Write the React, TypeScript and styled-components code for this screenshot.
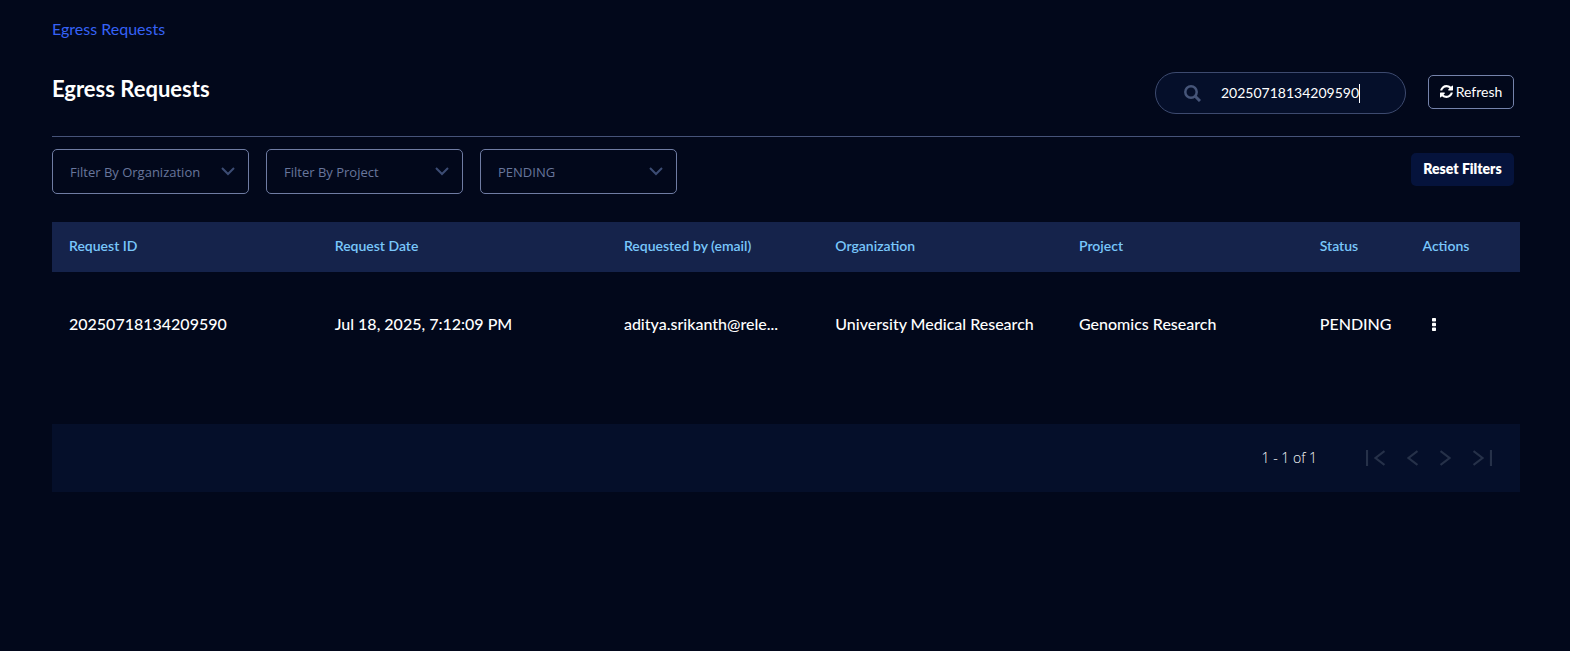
import React, { useState } from 'react';
import styled, { createGlobalStyle } from 'styled-components';

const GlobalStyle = createGlobalStyle`
  *, *::before, *::after { box-sizing: border-box; }
  body {
    margin: 0;
    background: #02081b;
    color: #fff;
    font-family: Lato, 'Liberation Sans', sans-serif;
    font-size: 16px;
    line-height: 24px;
  }
  button, input, select { font-family: inherit; }
`;

const Page = styled.main`
  padding: 17px 50px 24px 52px;
`;

const Breadcrumb = styled.a`
  display: inline-block;
  color: #3662f6;
  text-decoration: none;
`;

const Header = styled.header`
  display: flex;
  align-items: center;
  justify-content: space-between;
  margin-top: 16px;
  padding: 15px 6px 22px 0;
  border-bottom: 1px solid #465379;
`;

const Title = styled.h1`
  margin: 0 0 8px;
  font-size: 22px;
  line-height: 28px;
  font-weight: 700;
`;

const HeaderTools = styled.div`
  display: flex;
  align-items: center;
  gap: 22px;
`;

const SearchBox = styled.label`
  display: flex;
  align-items: center;
  width: 251px;
  height: 42px;
  padding-left: 28px;
  border: 1px solid #3d4a6f;
  border-radius: 21px;
  background: #050f2a;
  svg { margin-right: 20px; flex: none; }
`;

const SearchInput = styled.input`
  field-sizing: content;
  min-width: 8px;
  max-width: 160px;
  padding: 0;
  border: 0;
  outline: 0;
  background: transparent;
  color: #fff;
  caret-color: transparent;
  font-size: 14px;
  line-height: 20px;
`;

const Caret = styled.span`
  width: 1px;
  height: 19px;
  background: #fff;
`;

const RefreshButton = styled.button`
  display: flex;
  align-items: center;
  justify-content: center;
  gap: 3px;
  width: 86px;
  height: 34px;
  margin-bottom: 2px;
  padding: 0 0 2px;
  border: 1px solid #7583ab;
  border-radius: 5px;
  background: transparent;
  color: #fff;
  font-size: 14px;
`;

const FilterBar = styled.section`
  display: flex;
  align-items: center;
  justify-content: space-between;
  padding: 12px 6px 28px 0;
`;

const Filters = styled.div`
  display: flex;
  gap: 17px;
`;

const SelectWrap = styled.div`
  display: grid;
  align-items: center;
  width: 197px;
  > * { grid-area: 1 / 1; }
  svg { justify-self: end; margin-right: 14px; pointer-events: none; }
`;

const FilterSelect = styled.select`
  appearance: none;
  width: 100%;
  height: 45px;
  padding: 0 40px 0 17px;
  border: 1px solid #6f7ca3;
  border-radius: 5px;
  background: transparent;
  color: #68769c;
  font-family: 'Open Sans', sans-serif;
  font-size: 13px;
`;

const ResetButton = styled.button`
  height: 33px;
  width: 103px;
  margin-bottom: 4px;
  padding: 0 0 2px;
  border: 0;
  border-radius: 5px;
  background: #05133c;
  color: #fff;
  font-size: 14px;
  font-weight: 800;
`;

const Table = styled.table`
  width: 100%;
  table-layout: fixed;
  border-collapse: collapse;
  text-align: left;
`;

const Col = styled.col<{ $share: number }>`
  width: ${(p) => p.$share}%;
`;

const HeadCell = styled.th`
  height: 50px;
  padding: 0 17px 2px;
  background: #15234b;
  color: #79c7fb;
  font-size: 14px;
  font-weight: 600;
`;

const Cell = styled.td<{ $wide?: boolean }>`
  height: 106px;
  padding: 0 ${(p) => (p.$wide ? 0 : 17)}px 2px 17px;
  font-weight: 500;
  white-space: nowrap;
  overflow: hidden;
  text-overflow: ellipsis;
`;

const Email = styled.div`
  max-width: 158px;
  overflow: hidden;
  text-overflow: ellipsis;
`;

const MenuButton = styled.button`
  display: flex;
  align-items: center;
  justify-content: center;
  width: 24px;
  height: 24px;
  padding: 0;
  border: 0;
  background: transparent;
  color: #fff;
`;

const Pager = styled.nav`
  display: flex;
  align-items: center;
  justify-content: flex-end;
  height: 68px;
  margin-top: 46px;
  padding-right: 17px;
  background: #050f2a;
`;

const Range = styled.span`
  margin-right: 38px;
  font-family: 'Open Sans', sans-serif;
  font-weight: 300;
  font-size: 14px;
`;

const PagerButton = styled.button<{ $edge?: boolean }>`
  display: flex;
  align-items: center;
  justify-content: center;
  width: ${(p) => (p.$edge ? 41 : 33)}px;
  height: 32px;
  padding: 0;
  border: 0;
  background: transparent;
  color: #263149;
`;

const Chevron = () => (
  <svg width="14" height="9" viewBox="0 0 14 9" fill="none" stroke="#3c4c74" strokeWidth="2" aria-hidden="true">
    <path d="M1 1l6 6 6-6" />
  </svg>
);

const pagerIcons = [
  { label: 'First page', d: 'M1 0v16M18.500 1l-9 7 9 7', w: 19, edge: true },
  { label: 'Previous page', d: 'M10.500 1l-9 7 9 7', w: 11, edge: false },
  { label: 'Next page', d: 'M.5 1l9 7-9 7', w: 11, edge: false },
  { label: 'Last page', d: 'M.5 1l9 7-9 7M18 0v16', w: 19, edge: true },
];

const columns = [
  { name: 'Request ID', share: 18.1 },
  { name: 'Request Date', share: 19.7 },
  { name: 'Requested by (email)', share: 14.4 },
  { name: 'Organization', share: 16.6 },
  { name: 'Project', share: 16.4 },
  { name: 'Status', share: 7 },
  { name: 'Actions', share: 7.8 },
];

export default function App() {
  const [query, setQuery] = useState('20250718134209590');
  return (
    <>
      <GlobalStyle />
      <Page>
        <Breadcrumb href="#egress">Egress Requests</Breadcrumb>
        <Header>
          <Title>Egress Requests</Title>
          <HeaderTools>
            <SearchBox>
              <svg width="17" height="17" viewBox="0 0 17 17" fill="none" stroke="#465579" aria-hidden="true">
                <circle cx="7" cy="7" r="5.7" strokeWidth="2.500" />
                <path d="M11.2 11.2l4.8 4.8" strokeWidth="3" />
              </svg>
              <SearchInput aria-label="Search requests" value={query} onChange={(e) => setQuery(e.target.value)} />
              <Caret />
            </SearchBox>
            <RefreshButton type="button">
              <svg width="13" height="13" viewBox="0 0 1536 1536" fill="currentColor" aria-hidden="true">
                <path d="M1511 928q0 5-1 7-64 268-268 434.500T764 1536q-146 0-282.500-55T238 1324l-129 129q-19 19-45 19t-45-19-19-45V960q0-26 19-45t45-19h448q26 0 45 19t19 45-19 45l-137 137q71 66 161 102t187 36q134 0 250-65t186-179q11-17 53-117 8-23 30-23h192q13 0 22.500 9.500t9.500 22.500zm25-800v448q0 26-19 45t-45 19h-448q-26 0-45-19t-19-45 19-45l138-138Q969 256 768 256q-134 0-250 65T332 500q-11 17-53 117-8 23-30 23H50q-13 0-22.500-9.500T18 608v-7q65-268 270-434.500T768 0q146 0 284 55.500T1297 212l130-129q19-19 45-19t45 19 19 45z" />
              </svg>
              Refresh
            </RefreshButton>
          </HeaderTools>
        </Header>
        <FilterBar>
          <Filters>
            {['Filter By Organization', 'Filter By Project', 'PENDING'].map((text, i) => (
              <SelectWrap key={text}>
                <FilterSelect aria-label={['Organization', 'Project', 'Status'][i]}>
                  <option>{text}</option>
                </FilterSelect>
                <Chevron />
              </SelectWrap>
            ))}
          </Filters>
          <ResetButton type="button">Reset Filters</ResetButton>
        </FilterBar>
        <Table>
          <colgroup>
            {columns.map((c) => <Col key={c.name} $share={c.share} />)}
          </colgroup>
          <thead>
            <tr>{columns.map((c) => <HeadCell key={c.name} scope="col">{c.name}</HeadCell>)}</tr>
          </thead>
          <tbody>
            <tr>
              <Cell>20250718134209590</Cell>
              <Cell>Jul 18, 2025, 7:12:09 PM</Cell>
              <Cell><Email>aditya.srikanth@rele...</Email></Cell>
              <Cell>University Medical Research</Cell>
              <Cell>Genomics Research</Cell>
              <Cell $wide>PENDING</Cell>
              <Cell>
                <MenuButton type="button" aria-label="Row actions">
                  <svg width="4" height="13" viewBox="0 0 4 13" fill="currentColor" aria-hidden="true">
                    <rect width="4" height="3.500" rx=".7" />
                    <rect y="4.750" width="4" height="3.500" rx=".7" />
                    <rect y="9.500" width="4" height="3.500" rx=".7" />
                  </svg>
                </MenuButton>
              </Cell>
            </tr>
          </tbody>
        </Table>
        <Pager aria-label="Pagination">
          <Range>1 - 1 of 1</Range>
          {pagerIcons.map((icon) => (
            <PagerButton key={icon.label} type="button" aria-label={icon.label} $edge={icon.edge}>
              <svg width={icon.w} height="16" viewBox={`0 0 ${icon.w} 16`} fill="none" stroke="currentColor" strokeWidth="2.200" aria-hidden="true">
                <path d={icon.d} />
              </svg>
            </PagerButton>
          ))}
        </Pager>
      </Page>
    </>
  );
}
